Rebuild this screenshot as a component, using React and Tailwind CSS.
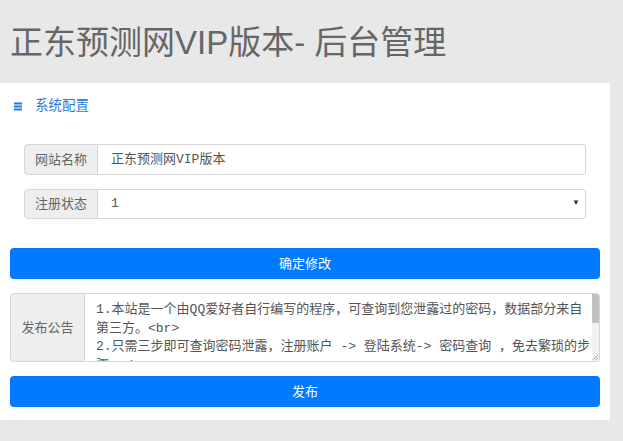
import { useState } from "react";

var NOTICE =
  "1.本站是一个由QQ爱好者自行编写的程序，可查询到您泄露过的密码，数据部分来自第三方。<br>\n" +
  "2.只需三步即可查询密码泄露，注册账户 -> 登陆系统-> 密码查询 ，免去繁琐的步骤。<br>\n";

var mono = "font-['Liberation_Mono','Noto_Sans_CJK_SC',monospace]";

function Addon({ children, tall }) {
  return (
    <span
      className={
        "flex items-center justify-center shrink-0 bg-[#eee] border border-[#d6d6d6] rounded-l-[4px] text-[13px] text-[#666] " +
        (tall ? "w-[75px]" : "w-[74px]")
      }
    >
      {children}
    </span>
  );
}

export default function App() {
  var [siteName, setSiteName] = useState("正东预测网VIP版本");
  var [reg, setReg] = useState("1");
  var [notice, setNotice] = useState(NOTICE);

  return (
    <div className="min-h-screen bg-[#e8e8e8] font-['Liberation_Sans','Noto_Sans_CJK_SC',sans-serif]">
      <div className="h-[83px] pt-[26px] pl-[10px]">
        <h1 className="text-[33px] leading-[33px] text-[#666] font-normal">正东预测网VIP版本- 后台管理</h1>
      </div>

      <div className="w-[610px] bg-white px-[10px] pt-[15px] pb-[13px]">
        <div className="flex items-center gap-[13px] pl-[4px] h-[16px] text-[13.5px] text-[#2a7ad8]">
          <svg width="8" height="9" viewBox="0 0 8 9" className="fill-current">
            <rect x="0" y="0.5" width="8" height="2" />
            <rect x="0" y="3.5" width="8" height="2" />
            <rect x="0" y="6.5" width="8" height="2" />
          </svg>
          <span>系统配置</span>
        </div>

        <div className="px-[14px] mt-[30px] flex flex-col gap-[14px]">
          <div className="flex h-[31px]">
            <Addon>网站名称</Addon>
            <input
              value={siteName}
              onChange={function (e) { setSiteName(e.target.value); }}
              className={"flex-1 min-w-0 border border-l-0 border-[#d6d6d6] rounded-r-[4px] px-[13px] text-[13px] text-[#555] outline-none " + mono}
            />
          </div>
          <div className="flex h-[30px]">
            <Addon>注册状态</Addon>
            <div className="relative flex-1">
              <select
                value={reg}
                onChange={function (e) { setReg(e.target.value); }}
                className={"appearance-none w-full h-full border border-l-0 border-[#d6d6d6] rounded-r-[4px] pl-[13px] text-[13px] text-[#555] bg-white outline-none " + mono}
              >
                <option value="1">1</option>
                <option value="0">0</option>
              </select>
              <span className="absolute right-[6px] top-[10px] text-[8px] leading-[8px] text-[#333] pointer-events-none">▼</span>
            </div>
          </div>
        </div>

        <button className="mt-[29px] w-full h-[31px] rounded-[4px] bg-[#007bff] text-white text-[13px]">确定修改</button>

        <div className="mt-[14px] flex h-[69px]">
          <Addon tall>发布公告</Addon>
          <div className="flex-1 min-w-0 flex border border-l-0 border-[#d6d6d6] rounded-r-[4px] overflow-hidden">
            <textarea
              value={notice}
              onChange={function (e) { setNotice(e.target.value); }}
              className={"flex-1 min-w-0 resize-none overflow-hidden pl-[11px] pr-0 py-[7px] text-[13px] leading-[18.5px] text-[#555] outline-none " + mono}
            />
            {/* thin scrollbar + resize grip */}
            <div className="w-[7px] shrink-0 bg-[#f1f1f1] flex flex-col justify-between">
              <div className="h-[29px] bg-[#c1c1c1]" />
              <svg width="7" height="7" viewBox="0 0 7 7" className="stroke-[#999]">
                <line x1="6" y1="1" x2="1" y2="6" strokeWidth="0.8" />
                <line x1="6" y1="4" x2="4" y2="6" strokeWidth="0.8" />
              </svg>
            </div>
          </div>
        </div>

        <button className="mt-[14px] w-full h-[31px] rounded-[4px] bg-[#007bff] text-white text-[13px]">发布</button>
      </div>
    </div>
  );
}
